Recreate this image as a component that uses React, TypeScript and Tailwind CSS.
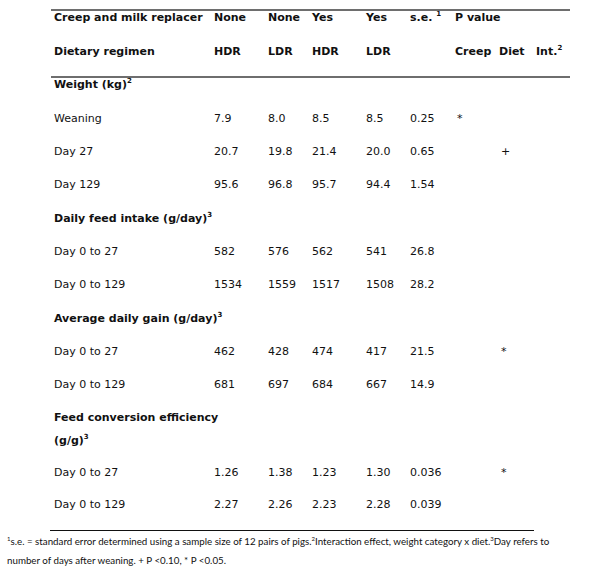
const cols = "grid grid-cols-[160px_54px_44px_54px_44px_45px_44px_37px_1fr]";

type Row = {
  label: string;
  vals: string[];
  h: string;
  creep?: string;
  diet?: string;
};

const Sup = ({ children }: { children: React.ReactNode }) => (
  <span className="relative -top-[5px] text-[7px] leading-none font-bold">{children}</span>
);

const FootSup = ({ children }: { children: React.ReactNode }) => (
  <span className="relative -top-[4px] text-[6px] leading-none">{children}</span>
);

const Section = ({ title, h, sup = "3" }: { title: React.ReactNode; h: string; sup?: string }) => (
  <div className={`${h} pl-[3px] font-bold`}>
    {title}
    <Sup>{sup}</Sup>
  </div>
);

const DataRow = ({ row }: { row: Row }) => (
  <div className={`${cols} ${row.h}`}>
    <div className="pl-[3px]">{row.label}</div>
    {row.vals.map((v, i) => (
      <div key={i} className="pl-[3px]">
        {v}
      </div>
    ))}
    <div className="pl-[5px]">{row.creep}</div>
    <div className="pl-[5px]">{row.diet}</div>
    <div />
  </div>
);

export default function App() {
  return (
    <div className="w-[600px] h-[570px] bg-white text-[#111] overflow-hidden">
      <div className="ml-[51px] w-[519px] pt-[9px] font-['DejaVu_Sans',Verdana,sans-serif] text-[11px] leading-[13px]">
        <div className="h-[2px] bg-[#6e6e6e]" />
        <div className={`${cols} h-[34px] font-bold`}>
          <div className="pl-[3px]">Creep and milk replacer</div>
          <div className="pl-[3px]">None</div>
          <div className="pl-[3px]">None</div>
          <div className="pl-[3px]">Yes</div>
          <div className="pl-[3px]">Yes</div>
          <div className="pl-[3px] whitespace-nowrap">
            s.e. <Sup>1</Sup>
          </div>
          <div className="col-span-3 pl-[3px]">P value</div>
        </div>
        <div className={`${cols} h-[31px] font-bold`}>
          <div className="pl-[3px]">Dietary regimen</div>
          <div className="pl-[3px]">HDR</div>
          <div className="pl-[3px]">LDR</div>
          <div className="pl-[3px]">HDR</div>
          <div className="pl-[3px]">LDR</div>
          <div />
          <div className="pl-[3px]">Creep</div>
          <div className="pl-[3px]">Diet</div>
          <div className="pl-[3px] whitespace-nowrap">
            Int.<Sup>2</Sup>
          </div>
        </div>
        <div className="h-[2px] bg-[#6e6e6e]" />

        <Section title="Weight (kg)" sup="2" h="h-[34px]" />
        <DataRow row={{ label: "Weaning", vals: ["7.9", "8.0", "8.5", "8.5", "0.25"], creep: "*", h: "h-[33px]" }} />
        <DataRow row={{ label: "Day 27", vals: ["20.7", "19.8", "21.4", "20.0", "0.65"], diet: "+", h: "h-[33px]" }} />
        <DataRow row={{ label: "Day 129", vals: ["95.6", "96.8", "95.7", "94.4", "1.54"], h: "h-[34px]" }} />

        <Section title="Daily feed intake (g/day)" h="h-[33px]" />
        <DataRow row={{ label: "Day 0 to 27", vals: ["582", "576", "562", "541", "26.8"], h: "h-[33px]" }} />
        <DataRow row={{ label: "Day 0 to 129", vals: ["1534", "1559", "1517", "1508", "28.2"], h: "h-[34px]" }} />

        <Section title="Average daily gain (g/day)" h="h-[33px]" />
        <DataRow row={{ label: "Day 0 to 27", vals: ["462", "428", "474", "417", "21.5"], diet: "*", h: "h-[33px]" }} />
        <DataRow row={{ label: "Day 0 to 129", vals: ["681", "697", "684", "667", "14.9"], h: "h-[33px]" }} />

        <div className="h-[55px] pl-[3px] font-bold">
          <div className="h-[23px]">Feed conversion efficiency</div>
          <div>
            (g/g)<Sup>3</Sup>
          </div>
        </div>
        <DataRow row={{ label: "Day 0 to 27", vals: ["1.26", "1.38", "1.23", "1.30", "0.036"], diet: "*", h: "h-[32px]" }} />
        <DataRow row={{ label: "Day 0 to 129", vals: ["2.27", "2.26", "2.23", "2.28", "0.039"], h: "h-[32px]" }} />
      </div>
      <div className="ml-[50px] w-[484px] h-px bg-[#111]" />
      <div className="w-[562px] pl-[7px] pt-[1px] font-['Lato',sans-serif] text-[9.75px] leading-[19px] text-[#111]">
        <FootSup>1</FootSup>s.e. = standard error determined using a sample size of 12 pairs of pigs.
        <FootSup>2</FootSup>Interaction effect, weight category x diet.
        <FootSup>3</FootSup>Day refers to number of days after weaning. + P &lt;0.10, * P &lt;0.05.
      </div>
    </div>
  );
}
